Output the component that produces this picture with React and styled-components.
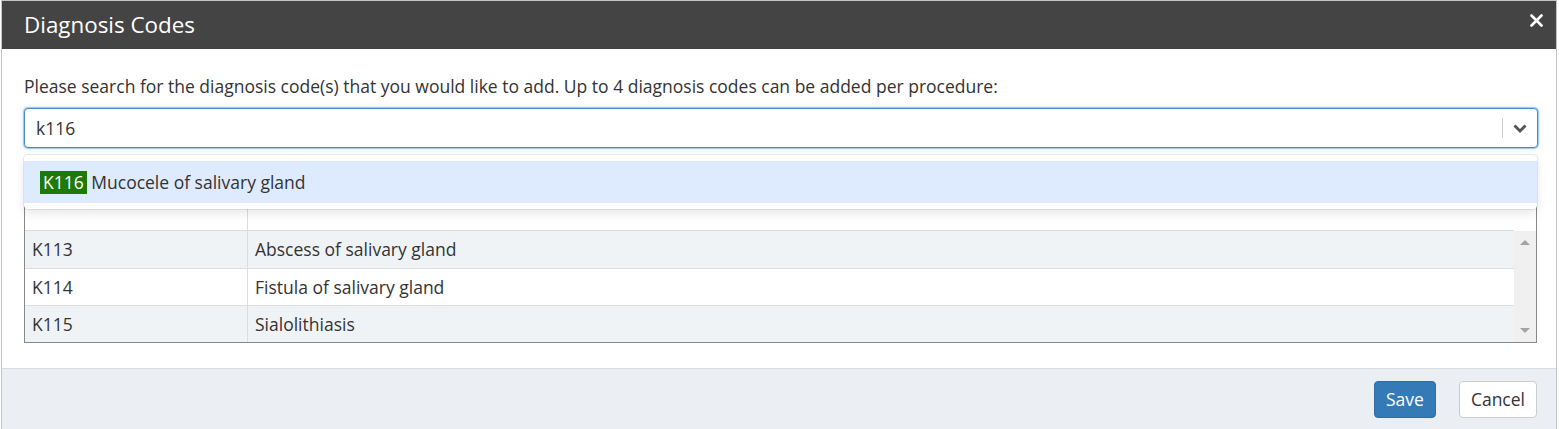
import React from "react";
import styled, { createGlobalStyle } from "styled-components";

const rows = [
  { code: "K113", desc: "Abscess of salivary gland" },
  { code: "K114", desc: "Fistula of salivary gland" },
  { code: "K115", desc: "Sialolithiasis" },
];

export default function App() {
  return (
    <>
      <Global />
      <Modal>
        <Header>
          <Title>Diagnosis Codes</Title>
          <Close aria-label="Close">
            <svg width="13" height="13" viewBox="0 0 13 13">
              <path d="M1.5 1.5 L11.5 11.5 M11.5 1.5 L1.5 11.5" stroke="#fff" strokeWidth="2.6" strokeLinecap="round" />
            </svg>
          </Close>
        </Header>

        <Body>
          <Intro>
            Please search for the diagnosis code(s) that you would like to add. Up to 4 diagnosis codes can be added per procedure:
          </Intro>

          <SelectWrap>
            <Control>
              <Value>k116</Value>
              <Indicators>
                <Sep />
                <svg width="20" height="20" viewBox="0 0 20 20">
                  <path d="M4.5 7.5 L10 13 L15.5 7.5" fill="none" stroke="#555" strokeWidth="2.8" />
                </svg>
              </Indicators>
            </Control>
            <Menu>
              <Option>
                <Mark>K116</Mark> Mucocele of salivary gland
              </Option>
            </Menu>
          </SelectWrap>

          <TableBox>
            <TableMain>
              <Row $head>
                <CodeCell />
                <DescCell />
              </Row>
              {rows.map((r, i) => (
                <Row key={r.code} $odd={i % 2 === 0} $last={i === rows.length - 1}>
                  <CodeCell>{r.code}</CodeCell>
                  <DescCell>{r.desc}</DescCell>
                </Row>
              ))}
            </TableMain>
            <Scroll>
              <ScrollTop />
              <Track>
                <Arrow $up />
                <Arrow />
              </Track>
            </Scroll>
          </TableBox>
        </Body>

        <Footer>
          <Btn $primary>Save</Btn>
          <Btn>Cancel</Btn>
        </Footer>
      </Modal>
    </>
  );
}

/* ===== styles ===== */

const Global = createGlobalStyle`
  html, body { margin: 0; padding: 0; background: #fff; }
  body { font-family: "Open Sans", "Noto Sans", sans-serif; color: #333; }
  * { box-sizing: border-box; }
`;

const Modal = styled.div`
  width: 1556px;
  margin-left: 1px;
  border: 1px solid #c4c4c4;
  border-bottom: none;
  background: #fff;
`;

const Header = styled.div`
  height: 48px;
  background: #444;
  display: flex;
  align-items: center;
  justify-content: space-between;
  padding: 0 13px 0 22px;
`;

const Title = styled.h4`
  margin: 0;
  font-size: 22.4px;
  font-weight: 400;
  color: #fff;
  line-height: 1;
`;

const Close = styled.button`
  border: 0;
  background: transparent;
  padding: 0;
  margin-top: -10px;
  display: flex;
  cursor: pointer;
`;

const Body = styled.div`
  padding: 25px 18px 25px 22px;
`;

const Intro = styled.p`
  margin: 0 0 10px;
  font-size: 17.5px;
  line-height: 24px;
  color: #333;
`;

const SelectWrap = styled.div`
  position: relative;
`;

const Control = styled.div`
  height: 40px;
  border: 1px solid #4a8ac9;
  border-radius: 4px;
  box-shadow: 0 0 0 1px #a9c9ea, 0 0 4px rgba(102, 175, 233, 0.5);
  display: flex;
  align-items: center;
  justify-content: space-between;
  padding-left: 11px;
  background: #fff;
`;

const Value = styled.span`
  font-size: 17.5px;
  color: #333;
`;

const Indicators = styled.div`
  display: flex;
  align-items: center;
  gap: 7px;
  padding-right: 7px;
`;

const Sep = styled.span`
  width: 1px;
  height: 20px;
  background: #ccc;
`;

const Menu = styled.div`
  position: absolute;
  top: 47px;
  left: 0;
  right: 1px;
  z-index: 2;
  background: #fff;
  border-radius: 4px;
  padding: 6px 0;
  box-shadow: 0 0 0 1px rgba(0, 0, 0, 0.08), 0 4px 11px rgba(0, 0, 0, 0.1);
`;

const Option = styled.div`
  height: 42px;
  display: flex;
  align-items: center;
  padding: 0 16px;
  background: #deebff;
  font-size: 17.5px;
  color: #333;
  white-space: pre;
`;

const Mark = styled.span`
  background: #1d7a07;
  color: #fff;
  padding: 0 3px;
  line-height: 23px;
`;

const TableBox = styled.div`
  margin-top: 46px;
  margin-right: 1px;
  border: 1px solid #888;
  border-top: none;
  display: flex;
`;

const TableMain = styled.div`
  flex: 1;
`;

const Row = styled.div`
  display: flex;
  height: ${(p) => (p.$head ? "37px" : p.$last ? "36px" : "37.5px")};
  background: ${(p) => (p.$odd ? "#f0f3f6" : "#fff")};
  border-bottom: ${(p) => (p.$last ? "none" : "1px solid #ddd")};
  font-size: 17.5px;
  color: #333;
`;

const CodeCell = styled.div`
  width: 223px;
  border-right: 1px solid #ddd;
  padding: 0 7px;
  display: flex;
  align-items: center;
`;

const DescCell = styled.div`
  flex: 1;
  padding: 0 7px;
  display: flex;
  align-items: center;
`;

const Scroll = styled.div`
  width: 22px;
  display: flex;
  flex-direction: column;
`;

const ScrollTop = styled.div`
  height: 37px;
  background: #fff;
`;

const Track = styled.div`
  flex: 1;
  background: #f0f0f0;
  display: flex;
  flex-direction: column;
  justify-content: space-between;
  align-items: center;
  padding: 9px 0 9px;
`;

const Arrow = styled.span`
  width: 0;
  height: 0;
  border-left: 5px solid transparent;
  border-right: 5px solid transparent;
  ${(p) => (p.$up ? "border-bottom: 5px solid #a3a3a3;" : "border-top: 5px solid #a3a3a3;")}
`;

const Footer = styled.div`
  height: 61px;
  background: #ebeff3;
  border-top: 1px solid #d8dde2;
  display: flex;
  justify-content: flex-end;
  align-items: center;
  gap: 23px;
  padding: 0 19px 0 0;
`;

const Btn = styled.button`
  height: 37px;
  padding: 0 11px;
  border-radius: 4px;
  font-family: "Open Sans", "Noto Sans", sans-serif;
  font-size: 17.5px;
  cursor: pointer;
  border: 1px solid ${(p) => (p.$primary ? "#2e6da4" : "#ccc")};
  background: ${(p) => (p.$primary ? "#337ab7" : "#fff")};
  color: ${(p) => (p.$primary ? "#fff" : "#333")};
`;
